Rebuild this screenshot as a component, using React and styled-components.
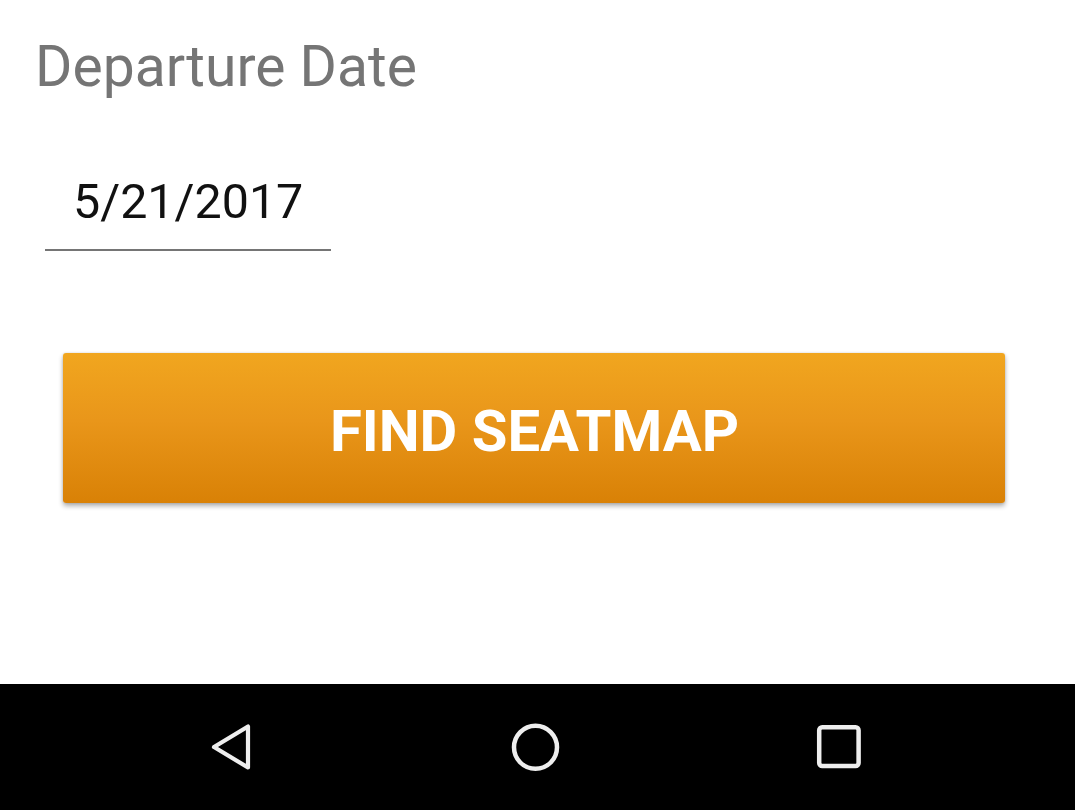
import React from 'react';
import styled, { createGlobalStyle } from 'styled-components';

const GlobalStyle = createGlobalStyle`
  html, body {
    margin: 0;
    padding: 0;
    background: #fff;
  }
  body {
    font-family: Roboto, "Noto Sans", "Liberation Sans", sans-serif;
  }
`;

const Screen = styled.div`
  display: flex;
  flex-direction: column;
  height: 100vh;
  width: 100vw;
  overflow: hidden;
`;

const Content = styled.main`
  flex: 1;
  display: flex;
  flex-direction: column;
  align-items: flex-start;
  padding: 39px 0 0 0;
  background: #fff;
`;

const Label = styled.h2`
  margin: 0 0 0 35px;
  font-size: 57px;
  line-height: 56px;
  font-weight: 400;
  color: #757575;
`;

const DateField = styled.div`
  margin: 82px 0 0 45px;
  width: 286px;
  padding: 0 0 23px 28px;
  box-sizing: border-box;
  border-bottom: 2px solid #757575;
  font-size: 48.4px;
  line-height: 49px;
  color: #111;
`;

const Button = styled.button`
  margin: 102px 0 0 63px;
  width: 942px;
  height: 150px;
  border: none;
  border-radius: 3px;
  background: linear-gradient(to bottom, #f1a61f 0%, #e9961a 45%, #d98106 100%);
  box-shadow: 0 3px 5px rgba(0, 0, 0, 0.32), 0 0 2px rgba(0, 0, 0, 0.15);
  display: flex;
  align-items: center;
  justify-content: center;
  padding: 0 0 0 1px;
  font-family: Roboto, "Liberation Sans", sans-serif;
  font-weight: 700;
  font-size: 58px;
  color: #fff;
  cursor: pointer;
`;

const ButtonText = styled.span`
  position: relative;
  top: 3px;
`;

const NavBar = styled.nav`
  height: 126px;
  background: #000;
  display: flex;
  align-items: center;
  justify-content: center;
  gap: 244px;
  padding-right: 5px;
`;

const NavButton = styled.div`
  width: 60px;
  height: 60px;
  display: flex;
`;

const BackIcon = () => (
  <svg width="60" height="60" viewBox="0 0 60 60">
    <path
      d="M13 30 L47 9.5 L47 50.5 Z"
      fill="none"
      stroke="#eee"
      strokeWidth="4.2"
      strokeLinejoin="round"
    />
  </svg>
);

const HomeIcon = () => (
  <svg width="60" height="60" viewBox="0 0 60 60">
    <circle cx="30.5" cy="30.3" r="21.5" fill="none" stroke="#eee" strokeWidth="4.5" />
  </svg>
);

const RecentsIcon = () => (
  <svg width="60" height="60" viewBox="0 0 60 60">
    <rect x="10.2" y="10.2" width="39.4" height="38.8" rx="3" fill="none" stroke="#eee" strokeWidth="4.5" />
  </svg>
);

export default function App() {
  return (
    <>
      <GlobalStyle />
      <Screen>
        <Content>
          <Label>Departure Date</Label>
          <DateField>5/21/2017</DateField>
          <Button>
            <ButtonText>FIND SEATMAP</ButtonText>
          </Button>
        </Content>
        <NavBar>
          <NavButton>
            <BackIcon />
          </NavButton>
          <NavButton>
            <HomeIcon />
          </NavButton>
          <NavButton>
            <RecentsIcon />
          </NavButton>
        </NavBar>
      </Screen>
    </>
  );
}
